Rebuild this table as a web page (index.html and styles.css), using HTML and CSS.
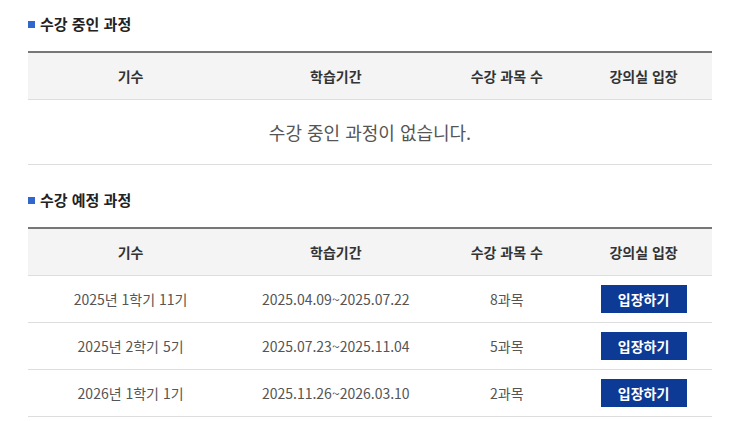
FILE: index.html
```html
<!DOCTYPE html>
<html lang="ko">
<head>
<meta charset="utf-8">
<link rel="stylesheet" href="styles.css">
</head>
<body>
<div class="page">
  <section class="section">
    <h2 class="title"><span class="bullet"></span>수강 중인 과정</h2>
    <table class="tbl">
      <colgroup><col class="c1"><col class="c2"><col class="c3"><col class="c4"></colgroup>
      <thead>
        <tr><th>기수</th><th>학습기간</th><th>수강 과목 수</th><th>강의실 입장</th></tr>
      </thead>
      <tbody>
        <tr><td class="empty" colspan="4">수강 중인 과정이 없습니다.</td></tr>
      </tbody>
    </table>
  </section>
  <section class="section">
    <h2 class="title"><span class="bullet"></span>수강 예정 과정</h2>
    <table class="tbl">
      <colgroup><col class="c1"><col class="c2"><col class="c3"><col class="c4"></colgroup>
      <thead>
        <tr><th>기수</th><th>학습기간</th><th>수강 과목 수</th><th>강의실 입장</th></tr>
      </thead>
      <tbody>
        <tr><td>2025년 1학기 11기</td><td>2025.04.09~2025.07.22</td><td>8과목</td><td><button class="btn">입장하기</button></td></tr>
        <tr><td>2025년 2학기 5기</td><td>2025.07.23~2025.11.04</td><td>5과목</td><td><button class="btn">입장하기</button></td></tr>
        <tr><td>2026년 1학기 1기</td><td>2025.11.26~2026.03.10</td><td>2과목</td><td><button class="btn">입장하기</button></td></tr>
      </tbody>
    </table>
  </section>
</div>
</body>
</html>
```
FILE: styles.css
```css
html, body { margin: 0; padding: 0; background: #fff; }
body { font-family: "Noto Sans CJK KR", "Noto Sans", sans-serif; color: #333; }
.page { width: 684px; margin-left: 28px; padding-top: 13px; }
.section { margin-bottom: 24px; }
.section:last-child { margin-bottom: 0; }
.title { display: flex; align-items: center; gap: 5px; margin: 0 0 16px; font-size: 15px; font-weight: 700; color: #222; line-height: 22px; }
.bullet { width: 7px; height: 7px; background: #3366cc; }
.tbl { width: 100%; border-collapse: collapse; table-layout: fixed; border-top: 2px solid #777; }
.c1, .c2 { width: 30%; }
.c3, .c4 { width: 20%; }
.tbl th { background: #f4f4f4; height: 46px; padding: 0; font-size: 14px; font-weight: 700; color: #333; border-bottom: 1px solid #ddd; text-align: center; }
.tbl td { height: 46px; padding: 0; font-size: 14px; color: #555; border-bottom: 1px solid #ddd; text-align: center; }
.tbl td.empty { height: 64px; font-size: 18px; color: #555; }
.btn { width: 86px; height: 28px; border: none; background: #0d3a94; color: #fff; font-family: inherit; font-size: 14px; font-weight: 700; padding: 0; cursor: pointer; }
```
